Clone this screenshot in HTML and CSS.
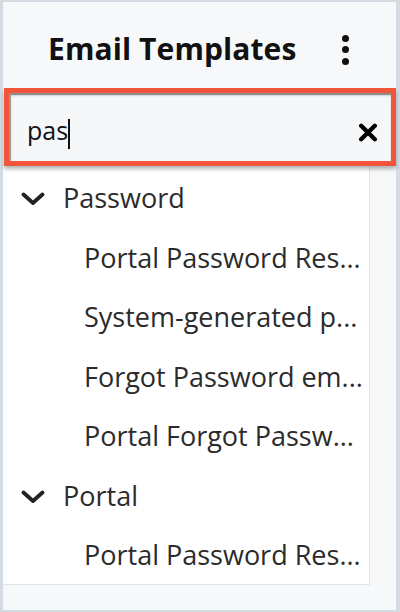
FILE: index.html
```html
<!DOCTYPE html>
<html>
<head>
<meta charset="utf-8">
<link rel="stylesheet" href="styles.css">
</head>
<body>
<div class="frame">
  <header class="header">
    <h1 class="title">Email Templates</h1>
    <button class="kebab" aria-label="More">
      <span class="dot"></span><span class="dot"></span><span class="dot"></span>
    </button>
  </header>
  <div class="search">
    <div class="search-input">
      <span class="query">pas</span><span class="caret"></span>
      <svg class="clear" width="20" height="19" viewBox="0 0 20 19"><path d="M3.2 2.8 L16.8 16.2 M16.8 2.8 L3.2 16.2" stroke="#000" stroke-width="4.4" stroke-linecap="round"/></svg>
    </div>
  </div>
  <div class="main">
    <ul class="list">
      <li class="row group">
        <svg class="chev" width="24" height="13" viewBox="0 0 24 13"><path d="M2.5 2.5 L12 11 L21.5 2.5" fill="none" stroke="#222" stroke-width="3.8" stroke-linecap="round" stroke-linejoin="round"/></svg>
        <span>Password</span>
      </li>
      <li class="row item">Portal Password Res...</li>
      <li class="row item">System-generated p...</li>
      <li class="row item">Forgot Password em...</li>
      <li class="row item">Portal Forgot Passw...</li>
      <li class="row group">
        <svg class="chev" width="24" height="13" viewBox="0 0 24 13"><path d="M2.5 2.5 L12 11 L21.5 2.5" fill="none" stroke="#222" stroke-width="3.8" stroke-linecap="round" stroke-linejoin="round"/></svg>
        <span>Portal</span>
      </li>
      <li class="row item">Portal Password Res...</li>
    </ul>
    <div class="side"></div>
  </div>
  <div class="footer"></div>
</div>
</body>
</html>
```

FILE: styles.css
```css
* { box-sizing: border-box; }
html, body { margin: 0; padding: 0; }
body {
  width: 400px;
  height: 612px;
  font-family: "Open Sans", "Noto Sans", "Liberation Sans", sans-serif;
  color: #2a2a2a;
  background: #f7f8fa;
}
.frame {
  width: 400px;
  height: 612px;
  display: flex;
  flex-direction: column;
  background: #f7f8fa;
  border-left: 3px solid #d4dbe3;
  border-top: 2px solid #d4dbe3;
  border-right: 4px solid #d4dbe3;
  border-bottom: 2px solid #d4dbe3;
}
.header {
  height: 86px;
  display: flex;
  align-items: center;
  padding-left: 45px;
  padding-right: 47px;
}
.title {
  margin: 0;
  font-size: 30px;
  font-weight: 700;
  color: #111;
  letter-spacing: 0.1px;
  line-height: 1;
  padding-top: 8px;
}
.kebab {
  margin-left: auto;
  border: 0;
  background: none;
  padding: 0;
  display: flex;
  flex-direction: column;
  gap: 4.5px;
  margin-top: 9px;
}
.dot {
  width: 7px;
  height: 7px;
  border-radius: 50%;
  background: #111;
}
.search {
  position: relative;
  z-index: 1;
  margin-left: 1px;
  height: 78px;
  border: 5px solid #f2553a;
  box-shadow: 0 3px 4px rgba(0, 0, 0, 0.3);
  background: #f6f7f9;
}
.search-input {
  height: 100%;
  display: flex;
  align-items: center;
  padding-left: 16px;
  padding-right: 13px;
  padding-top: 7px;
  border-top: 2px solid #8e8e8e;
  border-left: 2px solid #9a9a9a;
  box-shadow: inset 0 1px 2px rgba(0, 0, 0, 0.15);
  background: #f6f7f9;
}
.query {
  font-size: 25px;
  color: #111;
  line-height: 1;
  padding-bottom: 2px;
}
.caret {
  width: 1.5px;
  height: 30px;
  background: #111;
  margin-left: 0;
  margin-top: 4px;
}
.clear {
  margin-left: auto;
  margin-top: 1px;
}
.main {
  flex: 1;
  display: flex;
  min-height: 0;
}
.list {
  list-style: none;
  margin: 0;
  padding: 2px 0 0 0;
  width: 367px;
  background: #fff;
  border-right: 1px solid #e3e4e6;
  border-bottom: 1px solid #e3e4e6;
  overflow: hidden;
}
.side {
  flex: 1;
}
.footer {
  height: 25px;
}
.row {
  height: 59.5px;
  display: flex;
  align-items: center;
  font-size: 27px;
  color: #2b2b2b;
  white-space: nowrap;
}
.group {
  padding-left: 18px;
  gap: 18px;
}
.chev { flex: none; margin-top: 2px; }
.item {
  padding-left: 81px;
}
```
